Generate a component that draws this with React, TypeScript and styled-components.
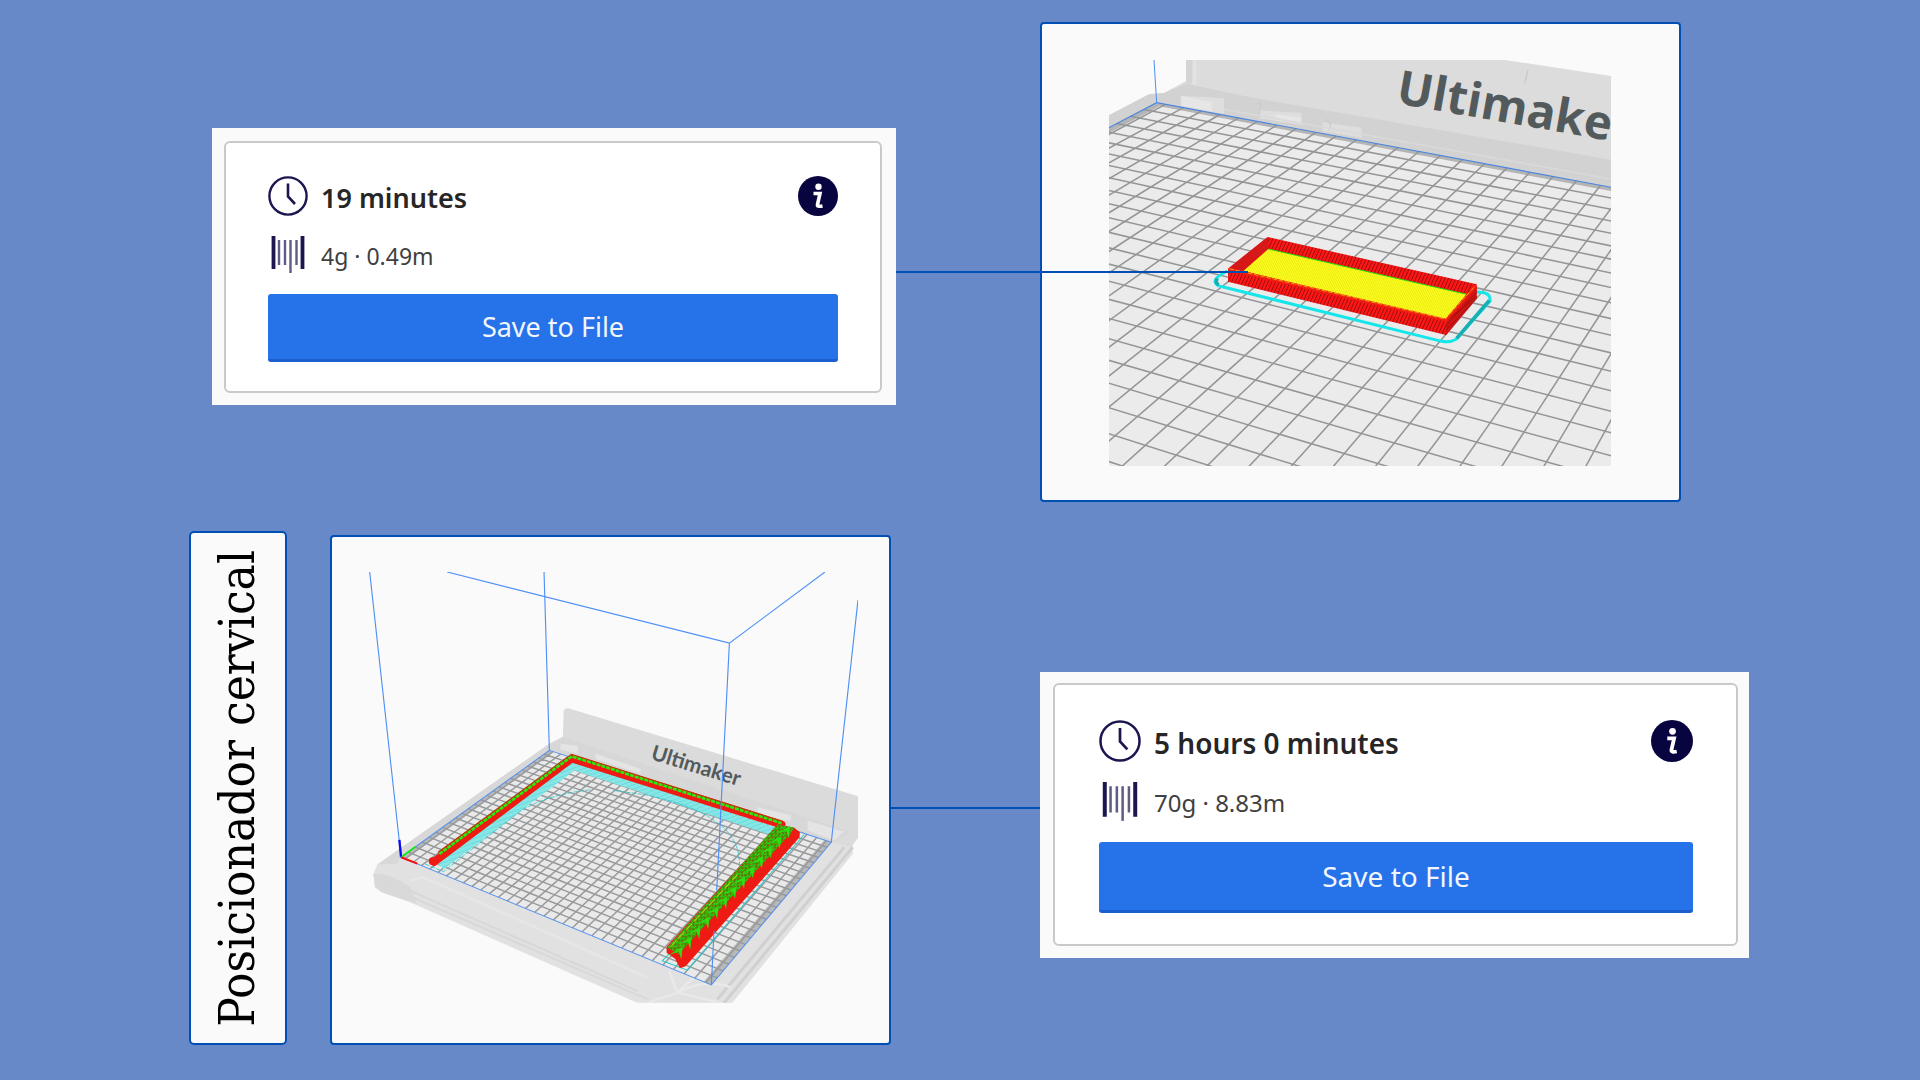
import React from 'react';
import styled, { createGlobalStyle } from 'styled-components';

const GlobalStyle = createGlobalStyle`
  *, *::before, *::after { box-sizing: border-box; }
  body {
    margin: 0;
    background: #6889c8;
    font-family: "Noto Sans", "Open Sans", sans-serif;
  }
`;

const Slide = styled.main`
  display: flex;
  flex-direction: column;
  gap: 29px;
  min-height: 100vh;
  padding: 22px 0 34px;
  background: #6889c8;
`;

const TopRow = styled.section`
  display: grid;
  grid-template-columns: 212fr 684fr 144fr 641fr 239fr;
  align-items: start;
`;

const BottomRow = styled.section`
  display: grid;
  grid-template-columns: 189fr 98fr 43fr 561fr 149fr 709fr 171fr;
  align-items: start;
`;

const Cell = styled.div<{ $column: number; $drop?: number }>`
  grid-column: ${(p) => p.$column};
  grid-row: 1;
  min-width: 0;
  padding-top: ${(p) => p.$drop ?? 0}px;
`;

const StretchCell = styled(Cell)`
  align-self: stretch;
  display: flex;
`;

const Connector = styled.div<{ $reach?: number }>`
  position: relative;
  z-index: 1;
  height: 2px;
  width: calc(100% + ${(p) => p.$reach ?? 0}px);
  background: #0050b3;
`;

const Frame = styled.figure<{ $pad: string }>`
  margin: 0;
  padding: ${(p) => p.$pad};
  border: 2px solid #0050b3;
  border-radius: 4px;
  background: #fafafa;
`;

const Scene = styled.svg`
  display: block;
  width: 100%;
  height: auto;
`;

const TitleBox = styled.div`
  flex: 1;
  display: flex;
  align-items: center;
  justify-content: center;
  border: 2px solid #0050b3;
  border-radius: 5px;
  background: #fafafa;
`;

const Title = styled.h1`
  margin: 0;
  writing-mode: vertical-rl;
  transform: rotate(180deg);
  white-space: nowrap;
  font: 400 49px/60px "DejaVu Serif Condensed", "DejaVu Serif", serif;
  color: #000;
`;

const CardMat = styled.article<{ $large?: boolean }>`
  padding: ${(p) => (p.$large ? '11px 11px 12px 13px' : '13px 14px 12px 12px')};
  background: #fafafa;
`;

const CardBody = styled.div<{ $large?: boolean }>`
  display: flex;
  flex-direction: column;
  gap: ${(p) => (p.$large ? 20 : 19)}px;
  padding: ${(p) => (p.$large ? '35px 43px 31px 44px' : '33px 42px 29px 42px')};
  border: 2px solid #c9c9c9;
  border-radius: 6px;
  background: #fff;
`;

const InfoRow = styled.div<{ $height: number }>`
  display: flex;
  align-items: center;
  gap: 13px;
  height: ${(p) => p.$height}px;
`;

const Duration = styled.strong<{ $large?: boolean }>`
  flex: 1;
  padding-top: 3px;
  font-size: ${(p) => (p.$large ? 28 : 27)}px;
  line-height: 36px;
  font-weight: 600;
  color: #262626;
`;

const Material = styled.span<{ $large?: boolean }>`
  padding-top: 1px;
  font-size: ${(p) => (p.$large ? 24 : 23)}px;
  line-height: 32px;
  color: #404040;
`;

const InfoButton = styled.button`
  display: flex;
  padding: 0;
  border: 0;
  border-radius: 50%;
  background: none;
  cursor: pointer;
`;

const SaveButton = styled.button<{ $large?: boolean }>`
  height: ${(p) => (p.$large ? 71 : 68)}px;
  padding: 0;
  border: 0;
  border-bottom: 3px solid #1b5fce;
  border-radius: 3px;
  background: #2672e8;
  color: #f2f6ff;
  font: 400 ${(p) => (p.$large ? 28 : 27)}px/36px "Noto Sans", "Open Sans", sans-serif;
  cursor: pointer;
`;

const ClockIcon = ({ size }: { size: number }) => (
  <svg width={size} height={size} viewBox="0 0 40 40" fill="none" stroke="#1b1650" aria-hidden="true">
    <circle cx="20" cy="20" r="18.6" strokeWidth="2.4" />
    <path d="M20 7.5V20.5L27 28" strokeWidth="2.6" />
  </svg>
);

const SpoolIcon = ({ size }: { size: number }) => (
  <svg width={size} height={size} viewBox="0 0 40 40" fill="none" stroke="#1b1650" aria-hidden="true">
    <path d="M5.5 1V34M34.5 1V34" strokeWidth="3.8" />
    <path d="M11 5V30M17 5V30M28.5 5V30" strokeWidth="2.4" opacity=".7" />
    <path d="M22.5 5V38" strokeWidth="2.4" opacity=".7" />
  </svg>
);

const InfoIcon = ({ size }: { size: number }) => (
  <svg width={size} height={size} viewBox="0 0 40 40" aria-hidden="true">
    <circle cx="20" cy="20" r="20" fill="#08043f" />
    <circle cx="20.5" cy="10.8" r="3.2" fill="#fff" />
    <path d="M15.5 17.5H22L19.5 28.5Q19 31 24.5 30" fill="none" stroke="#fff" strokeWidth="3.6" />
  </svg>
);

type PrintCardProps = { duration: string; material: string; large?: boolean };

const PrintCard = ({ duration, material, large }: PrintCardProps) => {
  const size = large ? 42 : 40;
  return (
    <CardMat $large={large}>
      <CardBody $large={large}>
        <InfoRow $height={size}>
          <ClockIcon size={size} />
          <Duration $large={large}>{duration}</Duration>
          <InfoButton type="button" aria-label="Info">
            <InfoIcon size={size} />
          </InfoButton>
        </InfoRow>
        <InfoRow $height={40}>
          <SpoolIcon size={size} />
          <Material $large={large}>{material}</Material>
        </InfoRow>
        <SaveButton type="button" $large={large}>Save to File</SaveButton>
      </CardBody>
    </CardMat>
  );
};

type Point = [number, number];

/* Solves the projective map that carries four plate points onto four picture points. */
function projector(from: Point[], to: Point[]) {
  const m: number[][] = [];
  from.forEach(([x, y], i) => {
    const [u, v] = to[i];
    m.push([x, y, 1, 0, 0, 0, -u * x, -u * y, u]);
    m.push([0, 0, 0, x, y, 1, -v * x, -v * y, v]);
  });
  for (let c = 0; c < 8; c++) {
    let best = c;
    for (let r = c + 1; r < 8; r++) if (Math.abs(m[r][c]) > Math.abs(m[best][c])) best = r;
    [m[c], m[best]] = [m[best], m[c]];
    for (let r = 0; r < 8; r++) {
      if (r === c) continue;
      const k = m[r][c] / m[c][c];
      for (let j = c; j < 9; j++) m[r][j] -= k * m[c][j];
    }
  }
  const h = m.map((row, i) => row[8] / row[i]);
  return (x: number, y: number): Point => {
    const w = h[6] * x + h[7] * y + 1;
    return [(h[0] * x + h[1] * y + h[2]) / w, (h[3] * x + h[4] * y + h[5]) / w];
  };
}

const trace = (pts: Point[]) => 'M' + pts.map(([x, y]) => `${x.toFixed(1)} ${y.toFixed(1)}`).join('L');

function gridPath(map: (x: number, y: number) => Point, maxX: number, maxY: number) {
  const parts: string[] = [];
  for (let x = 0.5; x <= maxX; x++) parts.push(trace([map(x, 0), map(x, maxY)]));
  for (let y = 1; y < maxY; y++) parts.push(trace([map(0, y), map(maxX, y)]));
  return parts.join('');
}

const closeUp = projector(
  [[0, 0], [21.5, 0], [23.5, 19], [15.5, 23]],
  [[143, 65], [1475, 313], [1060, 1145], [40, 1155]],
);

const overview = projector(
  [[0, 0], [33, 0], [33, 24], [0, 24]],
  [[567, 180], [1411, 455], [1052, 882], [123, 500]],
);

const CloseUpScene = () => (
  <Scene viewBox="0 -63 1506 1218" role="img" aria-label="Small rectangular part on the build plate">
    <defs>
      <pattern id="layers" width="10" height="40" patternUnits="userSpaceOnUse" patternTransform="rotate(24)">
        <rect width="10" height="40" fill="#fc1616" />
        <rect width="2.4" height="40" fill="#8f0c0c" />
      </pattern>
      <pattern id="skin" width="6" height="40" patternUnits="userSpaceOnUse" patternTransform="rotate(-28)">
        <rect width="6" height="40" fill="#ffff1c" />
        <rect width="1.6" height="40" fill="#d8d812" />
      </pattern>
    </defs>
    <path d="M0 103L120 40L165 36L231 0V-63H1188L1506 -15V330L143 65L0 138Z" fill="#dcdcdc" />
    <path d="M0 103L120 40L165 36L232 8L420 48L1506 236V330L143 65L0 138Z" fill="#d2d2d2" />
    <path d="M231 -63H252V10L231 6Z" fill="#d5d5d5" />
    <path d="M250 -63H262V12L250 10Z" fill="#e2e2e2" />
    <path d="M215 44L345 52V98L300 92L215 74ZM450 88L578 96V132L450 112ZM640 124L758 140V170L640 150Z" fill="#dedede" />
    <path d="M217 46L308 64V90L217 74ZM500 100L575 110V128L500 118Z" fill="#e6e6e6" />
    <path d="M435 70L455 66L450 110M650 112L665 130L660 148" fill="none" stroke="#cccccc" strokeWidth="4" />
    <path d="M345 85L1506 294" stroke="#d9d9d9" strokeWidth="5" />
    <path d="M1256 -32L1246 8L1252 -5Z" fill="#c9c9c9" stroke="#cccccc" strokeWidth="3" />
    <path d={trace([closeUp(0, 0), closeUp(33, 0), closeUp(33, 24), closeUp(0, 24)]) + 'Z'} fill="#ebebeb" />
    <path d={trace([closeUp(0, 0), closeUp(33, 0), closeUp(33, 0.35), closeUp(0.4, 0.35), closeUp(0.4, 24), closeUp(0, 24)]) + 'Z'} fill="#b4b4b4" />
    <path d={gridPath(closeUp, 33, 26)} fill="none" stroke="#939597" strokeWidth="4.6" />
    <path d={trace([closeUp(0, 24), closeUp(0, 0), closeUp(33, 0)])} fill="none" stroke="#4a85de" strokeWidth="3.5" />
    <path d="M135 -63L143 65" stroke="#4d8df5" strokeWidth="3" />
    <text x="858" y="66" transform="rotate(10 858 66)" fill="#535a5c" fontFamily="'Open Sans', sans-serif" fontWeight="700" fontSize="142">Ultimaker</text>
    <g transform="translate(273 420)">
      <path d="M82 150Q45 168 45 182Q47 194 70 198L725 361Q750 366 768 355L870 240Q872 222 855 216L830 212" fill="none" stroke="#14e6ea" strokeWidth="9" />
      <path d="M770 352L868 238M52 172Q44 184 56 192" fill="none" stroke="#16b0b4" strokeWidth="11" />
      <path d="M203 48L830 190V232L738 342L84 182V143Z" fill="url(#layers)" />
      <path d="M203 48L84 143L130 148L205 84Z" fill="#d61818" />
      <path d="M205 84L800 220L737 297L130 150Z" fill="url(#skin)" />
      <path d="M205 84L800 220" stroke="#22e010" strokeWidth="3" />
      <path d="M830 192V232L738 342V298Z" fill="#d01414" />
      <path d="M738 300L830 226M738 314L830 214M738 328L826 236" stroke="#a50f0f" strokeWidth="3" />
      <path d="M88 145L738 298L828 194" fill="none" stroke="#f02010" strokeWidth="9" />
      <path d="M88 143L736 294L826 194" fill="none" stroke="#ffd21c" strokeWidth="2" strokeDasharray="14 5" />
    </g>
  </Scene>
);

const chevrons = Array.from({ length: 13 }, (_, i) => {
  const t = i / 12;
  const x = 950 + t * 322;
  const y = 790 - t * 362;
  return `M${x - 28} ${y + 4}L${x + 16} ${y - 22}L${x + 12} ${y + 16}L${x + 4} ${y - 8}Z`;
}).join('');

const OverviewScene = () => (
  <Scene viewBox="27 -354 1464 1290" role="img" aria-label="Large frame part on the build plate">
    <defs>
      <pattern id="infill" width="16" height="14" patternUnits="userSpaceOnUse" patternTransform="rotate(-46)">
        <rect width="16" height="14" fill="#4a8f0c" />
        <path d="M0 3H10M5 9H16" stroke="#26d810" strokeWidth="4" />
        <path d="M10 5H14M0 12H6" stroke="#a03008" strokeWidth="3" />
      </pattern>
      <pattern id="support" width="12" height="12" patternUnits="userSpaceOnUse" patternTransform="rotate(-20)">
        <rect width="12" height="12" fill="#86e6e6" />
        <path d="M0 6H12" stroke="#62d6d8" strokeWidth="2" />
      </pattern>
    </defs>
    <path d="M567 160L607 140L1475 420V490L1115 936H830L150 635L65 605L45 590L40 550L52 522Z" fill="#e1e1e1" />
    <path d="M567 160L52 522L110 520L123 500L567 180L620 190L607 140Z" fill="#d8d8d8" />
    <path d="M607 150L610 60Q613 52 624 54L1493 318V440L1470 470L1411 455L567 180Z" fill="#dbdbdb" />
    <path d="M607 140L1470 425L1411 455L567 180Z" fill="#d7d7d7" />
    <path d="M600 160L652 166V190L600 178ZM705 190L840 235V250L705 205ZM1190 350L1290 374V392L1190 372ZM1340 390L1450 424L1420 450L1340 420Z" fill="#e4e4e4" />
    <path d="M40 550Q90 545 150 590L170 640L65 605L45 590Z" fill="#d9d9d9" />
    <path d="M45 560L150 600L830 900M60 578L860 925" fill="none" stroke="#d8d8d8" strokeWidth="6" />
    <path d="M150 570L190 560L860 860" fill="none" stroke="#e6e6e6" strokeWidth="8" />
    <path d="M1475 470L1090 936M1450 470L1070 925" fill="none" stroke="#d0d0d0" strokeWidth="9" />
    <path d="M925 840L950 905L860 936M950 905Q1040 860 1110 890M950 905L1080 936M950 905L1000 860" fill="none" stroke="#e9e9e9" strokeWidth="7" />
    <path d={trace([overview(0, 0), overview(33, 0), overview(33, 24), overview(0, 24)]) + 'Z'} fill="#e9e9e9" />
    <path d={trace([overview(0, 0), overview(0.5, 0), overview(0.5, 24), overview(0, 24)]) + 'Z'} fill="#b8b8b8" />
    <path d={trace([overview(32.3, 0), overview(33, 0), overview(33, 24), overview(32.3, 24)]) + 'Z'} fill="#b8b8b8" />
    <path d={gridPath(overview, 33, 24)} fill="none" stroke="#97999b" strokeWidth="4.4" />
    <path d={trace([overview(0, 0), overview(33, 0), overview(33, 24), overview(0, 24)]) + 'Z'} fill="none" stroke="#5590ee" strokeWidth="3" />
    <text x="868" y="206" transform="rotate(17 868 206)" fill="#535a5c" fontFamily="Lato, sans-serif" fontWeight="700" fontSize="63">Ultimaker</text>
    <path d="M226 512L636 212L1250 412L1232 434L642 240L250 536Z" fill="url(#support)" />
    <path d="M195 520L250 543L480 362Q560 312 690 298M760 300L860 314Q1000 345 1060 390Q1140 440 1136 530" fill="none" stroke="#2cc4c8" strokeWidth="2.5" strokeDasharray="14 4" />
    <path d="M1330 432L980 838L905 810L930 785" fill="none" stroke="#28c8cc" strokeWidth="3" />
    <path d="M222 514L634 204L1262 402" fill="none" stroke="#ee1a14" strokeWidth="24" strokeLinejoin="round" strokeLinecap="round" />
    <path d="M236 488L634 196L1262 396" fill="none" stroke="#b83a08" strokeWidth="11" />
    <path d="M238 490L634 198L1262 398" fill="none" stroke="#2ee810" strokeWidth="8" strokeDasharray="12 3" />
    <circle cx="218" cy="512" r="12" fill="#ee1a14" />
    <path d="M1250 402L1300 412L1317 425L1316 440L975 826L958 832L944 805L918 786V768Z" fill="#ee1a14" />
    <path d="M1250 402L1300 412L1290 428L954 790L920 770Z" fill="url(#infill)" />
    <path d={chevrons} fill="#2ee012" />
    <path d="M930 768L1130 552" stroke="#b8d80c" strokeWidth="3" strokeDasharray="26 8" />
    <g fill="none" stroke="#4f8ff6" strokeWidth="3.4">
      <path d="M29 -354L123 500M551 -354L567 180M1491 -270L1411 455" />
      <path d="M261 -354L1106 -141L1392 -354" />
      <path d="M1106 -141L1068 600M1060 720L1052 882" />
    </g>
    <path d="M118 448L123 500" stroke="#0a0af0" strokeWidth="7" />
    <path d="M123 500L166 468" stroke="#0cf00c" strokeWidth="5" />
    <path d="M123 500L172 519" stroke="#f40c0c" strokeWidth="6" />
  </Scene>
);

export default function App() {
  return (
    <>
      <GlobalStyle />
      <Slide>
        <TopRow>
          <Cell $column={2} $drop={106}>
            <PrintCard duration="19 minutes" material="4g · 0.49m" />
          </Cell>
          <Cell $column={3} $drop={249}>
            <Connector $reach={208} />
          </Cell>
          <Cell $column={4}>
            <Frame $pad="36px 68px 34px 67px">
              <CloseUpScene />
            </Frame>
          </Cell>
        </TopRow>
        <BottomRow>
          <StretchCell $column={2}>
            <TitleBox>
              <Title>Posicionador cervical</Title>
            </TitleBox>
          </StretchCell>
          <Cell $column={4} $drop={4}>
            <Frame $pad="35px 31px 40px 37px">
              <OverviewScene />
            </Frame>
          </Cell>
          <Cell $column={5} $drop={276}>
            <Connector />
          </Cell>
          <Cell $column={6} $drop={141}>
            <PrintCard duration="5 hours 0 minutes" material="70g · 8.83m" large />
          </Cell>
        </BottomRow>
      </Slide>
    </>
  );
}
